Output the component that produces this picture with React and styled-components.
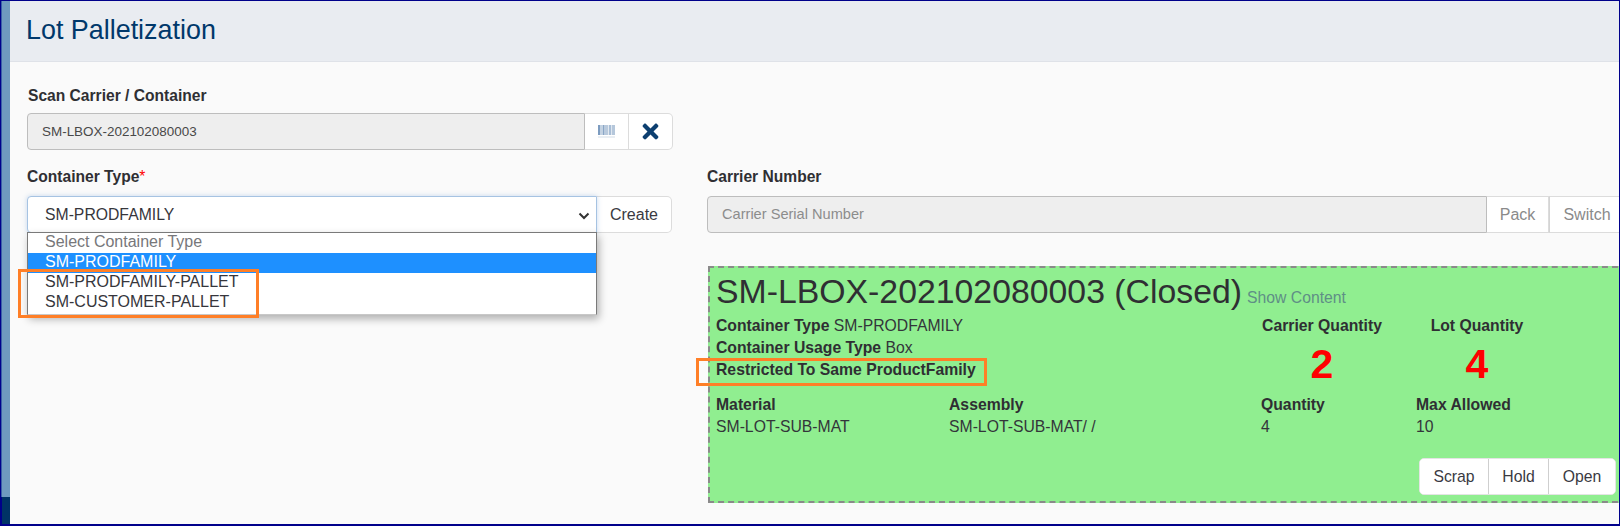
import React from "react";
import styled, { createGlobalStyle } from "styled-components";
import { FaTimes } from "react-icons/fa";

const Global = createGlobalStyle`
  html, body { margin: 0; padding: 0; background: #fff; }
  * { box-sizing: border-box; }
  body { font-family: "Liberation Sans", Arial, sans-serif; color: #333; }
`;

const Frame = styled.div`
  width: 1620px; height: 526px; display: flex; overflow: hidden;
  border-style: solid; border-color: #00008b; border-width: 1px 1px 2px 1px;
  background: #fafafa;
`;
const Sidebar = styled.div`
  width: 9px; flex: none; display: flex; flex-direction: column;
`;
const SideLight = styled.div`flex: 1; background: #6f9abf; border-left: 1px solid #3a5fa8;`;
const SideDark = styled.div`height: 27px; background: #003366; border-left: 1px solid #00008b;`;
const Main = styled.div`flex: 1; min-width: 0; display: flex; flex-direction: column;`;
const Header = styled.header`
  height: 61px; flex: none; background: #e9ecf1; border-bottom: 1px solid #dfe2e8;
  padding: 13px 0 0 16px;
`;
const Title = styled.h1`
  margin: 0; font-size: 26.9px; line-height: 32px; font-weight: 400; color: #00386b;
`;
const Content = styled.div`
  position: relative; flex: 1; padding: 24px 0 0 17px;
  display: grid; grid-template-columns: 645px 1fr; column-gap: 35px;
  grid-template-rows: 64px auto; align-content: start; row-gap: 18px;
`;
const ScanField = styled.div`grid-column: 1; grid-row: 1; width: 646px; padding-top: 1px;`;
const Label = styled.label`
  display: block; font-size: 15.6px; line-height: 18px; font-weight: 700; color: #2f2f33;
  margin-bottom: ${(p) => p.$gap}px; padding-left: ${(p) => p.$indent || 0}px;
`;
const Req = styled.span`color: #f00; font-weight: 400;`;
const InputRow = styled.div`
  display: flex; height: 37px; width: ${(p) => (p.$width ? `${p.$width}px` : "auto")};
`;
const ReadInput = styled.div`
  flex: 1; min-width: 0; background: #eeeeee; border: 1px solid #bdbdbd;
  border-radius: 4px 0 0 4px;
  padding-left: 14px; line-height: 35px;
  font-size: ${(p) => (p.$placeholder ? 14.6 : 13.45)}px;
  color: ${(p) => (p.$placeholder ? "#8c8c8c" : "#484848")};
`;
const AddonBtn = styled.button`
  flex: none; width: ${(p) => p.$w}px; height: 100%; padding: 0; background: #fff;
  border: 1px solid #dcdcdc; border-left: ${(p) => (p.$first ? "none" : "1px solid #d4d4d4")};
  border-radius: ${(p) => (p.$last ? "0 5px 5px 0" : "0")};
  font: 16px "Liberation Sans", Arial, sans-serif; color: ${(p) => p.$color || "#3a3a42"};
  display: flex; align-items: center; justify-content: center;
`;
const LeftCol = styled.div`position: relative; grid-column: 1; grid-row: 2;`;
const RightCol = styled.div`grid-column: 2; grid-row: 2; min-width: 0;`;
const SelectBox = styled.div`
  flex: 1; min-width: 0; position: relative; background: #fff; border: 1px solid #a6c3e2;
  border-radius: 4px 0 0 4px; box-shadow: 0 0 5px rgba(130,170,220,.45);
  padding-left: 17px; font-size: 15.75px; line-height: 35px; color: #36363c;
  display: flex; align-items: center; justify-content: space-between;
`;
const Chevron = styled.svg`width: 12px; height: 8px; margin-right: 6px; margin-top: 2px;`;
const Menu = styled.ul`
  position: absolute; left: 0; top: 64px; width: 570px; margin: 0; padding: 0 0 1px; list-style: none;
  background: #fff; border: 1px solid #7a7a7a; border-bottom-color: #c8c8c8;
  box-shadow: 2px 4px 8px rgba(0,0,0,.3); z-index: 2;
`;
const Option = styled.li`
  height: 20px; padding-left: 17px; font-size: 16px; line-height: 17px;
  background: ${(p) => (p.$active ? "#1e90ff" : "transparent")};
  color: ${(p) => (p.$active ? "#fff" : p.$muted ? "#77777a" : "#36363c")};
`;
const Highlight = styled.div`
  position: absolute; left: ${(p) => p.$l}px; top: ${(p) => p.$t}px;
  width: ${(p) => p.$w}px; height: ${(p) => p.$h}px;
  border: 3px solid #ff7f27; z-index: 3; pointer-events: none;
`;
const Card = styled.section`
  position: relative; margin: 33px 0 0 1px; width: 920px; height: 237px; background: #90ee90;
  border: 2px dashed #8a8a8a; padding: 4px 0 0 6px;
`;
const CardTitleRow = styled.div`display: flex; align-items: baseline; height: 39px;`;
const CardTitle = styled.h2`
  margin: 0; font-size: 33.8px; line-height: 39px; font-weight: 400; color: #2f2f33; white-space: nowrap;
`;
const ShowLink = styled.a`
  margin-left: 5px; font-size: 15.75px; color: #5f8f86;
`;
const TopGrid = styled.div`
  display: grid; grid-template-columns: 546px 120px 48px 94px; margin-top: 4px;
`;
const Meta = styled.div`grid-column: 1; display: flex; flex-direction: column;`;
const MetaLine = styled.div`font-size: 15.75px; line-height: 22.2px; color: #33353a; white-space: nowrap;`;
const Strong = styled.b`font-weight: 700; color: #2f2f33;`;
const Stat = styled.div`
  grid-column: ${(p) => p.$col}; text-align: center; font-size: 15.75px; line-height: 21px; font-weight: 700; color: #2f2f33;
  white-space: nowrap;
`;
const StatValue = styled.div`
  font-size: 41px; line-height: 57px; font-weight: 700; color: #f00;
`;
const DetailGrid = styled.div`
  display: grid; grid-template-columns: 233px 312px 155px 100px; margin-top: 1px;
`;
const Cell = styled.div`font-size: 15.75px; line-height: 21.5px; color: #33353a; white-space: nowrap;`;
const HeadCell = styled(Cell)`font-weight: 700; color: #2f2f33;`;
const Actions = styled.div`
  position: absolute; left: 709px; top: 190px; display: flex; height: 37px;
  background: #fff; border: 1px solid #e4e4e4; border-radius: 5px; overflow: hidden;
`;
const ActionBtn = styled.button`
  width: ${(p) => p.$w}px; height: 100%; padding: 0; background: #fff; border: none;
  border-left: ${(p) => (p.$first ? "none" : "1px solid #cfcfcf")};
  font: 15.75px "Liberation Sans", Arial, sans-serif; color: #3a3a42;
`;

const BARS = [[0,2,"#7d9cc0"],[2,3,"#c3d2e2"],[5,1,"#8aa6c6"],[6,4,"#b9cadd"],[10,1,"#e3eaf1"],[11,2,"#a9bed6"],[13,1,"#dfe7f0"],[14,3,"#b5c7db"]];
const Barcode = () => (
  <svg width="17" height="13" viewBox="0 0 17 13">
    {BARS.map(([x, w, c]) => <rect key={x} x={x} y="0" width={w} height="10" fill={c} />)}
    <rect x="0" y="11.5" width="17" height="1" fill="#d3dde8" />
  </svg>
);

export default function App() {
  return (
    <>
      <Global />
      <Frame>
        <Sidebar><SideLight /><SideDark /></Sidebar>
        <Main>
          <Header><Title>Lot Palletization</Title></Header>
          <Content>
            <ScanField>
              <Label $indent={1} $gap={8}>Scan Carrier / Container</Label>
              <InputRow>
                <ReadInput>SM-LBOX-202102080003</ReadInput>
                <AddonBtn $w={44} $first><Barcode /></AddonBtn>
                <AddonBtn $w={44} $last $first><FaTimes size={23} color="#0d3f70" /></AddonBtn>
              </InputRow>
            </ScanField>
            <LeftCol>
              <Label $gap={10}>Container Type<Req>*</Req></Label>
              <InputRow>
                <SelectBox>
                  SM-PRODFAMILY
                  <Chevron viewBox="0 0 12 8"><path d="M1.5 1.5 6 6l4.5-4.5" fill="none" stroke="#333" strokeWidth="2" /></Chevron>
                </SelectBox>
                <AddonBtn $w={75} $last $first>Create</AddonBtn>
              </InputRow>
              <Menu>
                <Option $muted>Select Container Type</Option>
                <Option $active>SM-PRODFAMILY</Option>
                <Option>SM-PRODFAMILY-PALLET</Option>
                <Option>SM-CUSTOMER-PALLET</Option>
              </Menu>
              <Highlight $l={-9} $t={101} $w={241} $h={49} />
            </LeftCol>
            <RightCol>
              <Label $gap={10}>Carrier Number</Label>
              <InputRow $width={918}>
                <ReadInput $placeholder>Carrier Serial Number</ReadInput>
                <AddonBtn $w={62} $first $color="#8a8a8a">Pack</AddonBtn>
                <AddonBtn $w={76} $color="#8a8a8a">Switch</AddonBtn>
              </InputRow>
              <Card>
                <CardTitleRow>
                  <CardTitle>SM-LBOX-202102080003 (Closed)</CardTitle>
                  <ShowLink>Show Content</ShowLink>
                </CardTitleRow>
                <TopGrid>
                  <Meta>
                    <MetaLine><Strong>Container Type</Strong> SM-PRODFAMILY</MetaLine>
                    <MetaLine><Strong>Container Usage Type</Strong> Box</MetaLine>
                    <MetaLine><Strong>Restricted To Same ProductFamily</Strong></MetaLine>
                  </Meta>
                  <Stat $col={2}>Carrier Quantity<StatValue>2</StatValue></Stat>
                  <Stat $col={4}>Lot Quantity<StatValue>4</StatValue></Stat>
                </TopGrid>
                <DetailGrid>
                  <HeadCell>Material</HeadCell>
                  <HeadCell>Assembly</HeadCell>
                  <HeadCell>Quantity</HeadCell>
                  <HeadCell>Max Allowed</HeadCell>
                  <Cell>SM-LOT-SUB-MAT</Cell>
                  <Cell>SM-LOT-SUB-MAT/ /</Cell>
                  <Cell>4</Cell>
                  <Cell>10</Cell>
                </DetailGrid>
                <Highlight $l={-14} $t={90} $w={291} $h={28} />
                <Actions>
                  <ActionBtn $w={68} $first>Scrap</ActionBtn>
                  <ActionBtn $w={60}>Hold</ActionBtn>
                  <ActionBtn $w={67}>Open</ActionBtn>
                </Actions>
              </Card>
            </RightCol>
          </Content>
        </Main>
      </Frame>
    </>
  );
}
